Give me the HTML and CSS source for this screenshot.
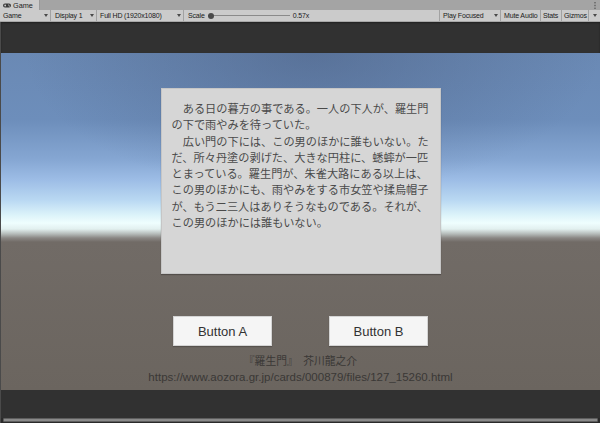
FILE: index.html
```html
<!DOCTYPE html>
<html lang="ja">
<head>
<meta charset="utf-8">
<title>Game</title>
<link rel="stylesheet" href="styles.css">
</head>
<body>
<div class="window">
  <div class="tabbar">
    <div class="tab">
      <svg class="tab-icon" width="8" height="5" viewBox="0 0 8 5"><rect x="0" y="0.5" width="8" height="4" rx="2" fill="#3a3a3a"/><circle cx="2.2" cy="2.5" r="0.9" fill="#cbcbcb"/><circle cx="5.6" cy="2" r="0.6" fill="#cbcbcb"/><circle cx="6.4" cy="3" r="0.6" fill="#cbcbcb"/></svg>
      <span>Game</span>
    </div>
    <div class="kebab"><svg width="2" height="7" viewBox="0 0 2 7"><rect x="0.5" y="0" width="1" height="1.4" fill="#444"/><rect x="0.5" y="2.8" width="1" height="1.4" fill="#444"/><rect x="0.5" y="5.6" width="1" height="1.4" fill="#444"/></svg></div>
  </div>
  <div class="toolbar">
    <div class="tb-item dd w-game"><span>Game</span><i class="arrow"></i></div>
    <div class="tb-item dd w-display"><span>Display 1</span><i class="arrow"></i></div>
    <div class="tb-item dd w-res"><span>Full HD (1920x1080)</span><i class="arrow"></i></div>
    <div class="tb-item scale"><span>Scale</span><div class="slider"><div class="knob"></div></div><span>0.57x</span></div>
    <div class="tb-spacer"></div>
    <div class="tb-item dd w-play"><span>Play Focused</span><i class="arrow"></i></div>
    <div class="tb-item w-mute"><span>Mute Audio</span></div>
    <div class="tb-item w-stats"><span>Stats</span></div>
    <div class="tb-item w-gizmos"><span>Gizmos</span></div>
    <div class="tb-item w-more"><i class="arrow"></i></div>
  </div>
  <div class="viewport">
    <div class="letterbox-top"></div>
    <div class="game">
      <div class="panel">
        <p>　ある日の暮方の事である。一人の下人が、羅生門の下で雨やみを待っていた。</p>
        <p>　広い門の下には、この男のほかに誰もいない。ただ、所々丹塗の剥げた、大きな円柱に、蟋蟀が一匹とまっている。羅生門が、朱雀大路にある以上は、この男のほかにも、雨やみをする市女笠や揉烏帽子が、もう二三人はありそうなものである。それが、この男のほかには誰もいない。</p>
      </div>
      <div class="buttons">
        <div class="btn">Button A</div>
        <div class="btn">Button B</div>
      </div>
      <div class="credit">
        <div class="credit-title">『羅生門』　芥川龍之介</div>
        <div class="credit-url">https://www.aozora.gr.jp/cards/000879/files/127_15260.html</div>
      </div>
    </div>
    <div class="letterbox-bottom"></div>
    <div class="hscroll"><div class="thumb"></div></div>
  </div>
</div>
</body>
</html>
```

FILE: styles.css
```css
html, body {
  margin: 0;
  padding: 0;
}
body {
  width: 600px;
  height: 423px;
  overflow: hidden;
  font-family: "Liberation Sans", Arial, sans-serif;
  background: #323232;
}
.window {
  display: flex;
  flex-direction: column;
  height: 423px;
}

/* tab bar */
.tabbar {
  height: 10px;
  flex: none;
  background: #a4a4a4;
  display: flex;
  align-items: stretch;
}
.tab {
  width: 40px;
  box-sizing: border-box;
  background: #cbcbcb;
  border-right: 1px solid #9a9a9a;
  display: flex;
  align-items: center;
  gap: 2px;
  padding-left: 3px;
  font-family: "Liberation Sans", Arial, sans-serif;
  font-size: 7.3px;
  color: #1e1e1e;
}
.tab-icon {
  display: block;
}
.kebab {
  margin-left: auto;
  width: 10px;
  display: flex;
  align-items: center;
  justify-content: center;
}
.kebab svg { display: block; }

/* toolbar */
.toolbar {
  height: 12px;
  flex: none;
  box-sizing: border-box;
  background: #cbcbcb;
  border-bottom: 1px solid #a8a8a8;
  display: flex;
  align-items: stretch;
  font-family: "Liberation Sans", Arial, sans-serif;
  font-size: 7px;
  letter-spacing: -0.15px;
  color: #1a1a1a;
}
.tb-item {
  box-sizing: border-box;
  display: flex;
  align-items: center;
  flex: none;
  padding-left: 3px;
  border-right: 1px solid #a2a2a2;
  white-space: nowrap;
}
.tb-item.dd {
  justify-content: space-between;
  padding-right: 2px;
}
.arrow {
  display: block;
  width: 0;
  height: 0;
  border-left: 2.5px solid transparent;
  border-right: 2.5px solid transparent;
  border-top: 3px solid #4a4a4a;
}
.w-game { width: 51px; }
.w-display { width: 46px; padding-left: 4px; }
.w-res { width: 87px; }
.scale {
  padding-left: 4px;
  border-right: none;
}
.slider {
  width: 82px;
  height: 6px;
  margin-left: 3px;
  margin-right: 3px;
  position: relative;
  display: flex;
  align-items: center;
}
.slider::before {
  content: "";
  display: block;
  width: 100%;
  height: 1px;
  background: #8a8a8a;
}
.knob {
  position: absolute;
  left: 0;
  top: 0;
  width: 6px;
  height: 6px;
  border-radius: 50%;
  background: #4a4a4a;
}
.tb-spacer {
  flex: 1;
  border-right: 1px solid #a2a2a2;
}
.w-play { width: 61px; }
.w-mute { width: 40px; }
.w-stats { width: 21px; padding-left: 2px; }
.w-gizmos { width: 27px; padding-left: 2px; }
.w-more {
  width: 11px;
  border-right: none;
  justify-content: center;
  padding-left: 0;
}

/* viewport */
.viewport {
  flex: 1;
  display: flex;
  flex-direction: column;
  background: #313131;
  border-left: 1px solid #4a4a4a;
}
.letterbox-top {
  height: 31px;
  flex: none;
  box-shadow: inset 0 1px 2px rgba(0,0,0,0.35);
}
.game {
  height: 337px;
  flex: none;
  box-sizing: border-box;
  padding-top: 35px;
  display: flex;
  flex-direction: column;
  align-items: center;
  background:
    radial-gradient(ellipse 48% 42% at 52% 0%, rgba(68, 86, 120, 0.45), rgba(68, 86, 120, 0) 100%),
    linear-gradient(to bottom,
      #6a89b4 0px,
      #6d8ebb 67px,
      #86a7d3 107px,
      #9dbde6 127px,
      #b9d8f2 147px,
      #dcf3fa 162px,
      #effefe 170px,
      #e2f0ef 176px,
      #b4bab8 181px,
      #8a8784 185px,
      #716b66 189px,
      #6b655f 100%);
}
.panel {
  width: 280px;
  height: 186px;
  box-sizing: border-box;
  padding: 11px 10px 0 10px;
  background: #d6d6d6;
  border: 1px solid #c6c6c6;
  box-shadow: 0 1px 1px rgba(0,0,0,0.25);
  font-family: "Noto Sans CJK JP", sans-serif;
  font-size: 11.2px;
  line-height: 16.3px;
  color: #4a4a4a;
}
.panel p {
  margin: 0;
}
.buttons {
  margin-top: 42px;
  display: flex;
  gap: 57px;
}
.btn {
  width: 99px;
  height: 30px;
  box-sizing: border-box;
  background: #f5f5f5;
  border: 1px solid #d4d4d4;
  box-shadow: 0 1px 1px rgba(0,0,0,0.2);
  display: flex;
  align-items: center;
  justify-content: center;
  font-family: "Liberation Sans", Arial, sans-serif;
  font-size: 13px;
  color: #323232;
}
.credit {
  margin-top: 6px;
  text-align: center;
  color: #3a3836;
}
.credit-title {
  font-family: "Noto Sans CJK JP", sans-serif;
  font-size: 10.8px;
  line-height: 17px;
}
.credit-url {
  font-family: "Liberation Sans", Arial, sans-serif;
  font-size: 11.5px;
  line-height: 17px;
}
.letterbox-bottom {
  flex: 1;
}
.hscroll {
  height: 5px;
  flex: none;
  padding: 0 2px 1px 2px;
  box-sizing: border-box;
  background: #2a2a2a;
}
.thumb {
  height: 4px;
  border-radius: 1px;
  background: #8a8a8a;
  border: 1px solid #5e5e5e;
  box-sizing: border-box;
}
```
